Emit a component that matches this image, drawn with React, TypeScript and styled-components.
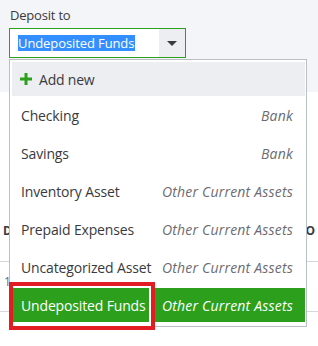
import React from 'react';
import styled, { createGlobalStyle } from 'styled-components';

const GlobalStyle = createGlobalStyle`
  html, body {
    margin: 0;
    padding: 0;
    background: #ffffff;
  }
  body {
    font-family: "Open Sans", "Liberation Sans", Arial, sans-serif;
    color: #393a3d;
  }
`;

const Page = styled.div`
  position: relative;
  width: 318px;
  height: 346px;
  overflow: hidden;
  background: #ffffff;
`;

const Header = styled.div`
  height: 92px;
  background: #f4f5f8;
  padding: 8px 0 0 10px;
  box-sizing: border-box;
`;

const Label = styled.div`
  font-size: 13px;
  font-weight: 500;
  line-height: 15px;
  letter-spacing: -0.2px;
  color: #393a3d;
  margin-bottom: 5px;
`;

const Select = styled.div`
  display: flex;
  width: 177px;
  height: 30px;
  margin-left: -1px;
  box-sizing: border-box;
  border: 1px solid #2ca01c;
  background: #ffffff;
`;

const SelectValue = styled.div`
  flex: 1;
  display: flex;
  align-items: center;
  padding-left: 8px;
`;

const Highlight = styled.span`
  background: #338fff;
  color: #ffffff;
  font-size: 13px;
  line-height: 16px;
  letter-spacing: -0.1px;
  padding-right: 1px;
`;

const ArrowButton = styled.div`
  width: 26px;
  display: flex;
  align-items: center;
  justify-content: center;
  background: #eceef1;
`;

const Arrow = styled.div`
  width: 0;
  height: 0;
  border-left: 5px solid transparent;
  border-right: 5px solid transparent;
  border-top: 5px solid #393a3d;
`;

const Table = styled.div`
  padding-top: 130px;
`;

const TableHead = styled.div`
  display: flex;
  justify-content: space-between;
  padding: 0 3px 0 3px;
  height: 39px;
  font-size: 12px;
  font-weight: 700;
  color: #393a3d;
`;

const TableRow = styled.div`
  display: flex;
  align-items: flex-start;
  height: 49px;
  padding-left: 4px;
  border-top: 1px solid #d4d7dc;
  border-bottom: 1px solid #d4d7dc;
  font-size: 12px;
  line-height: 40px;
  color: #6b6c72;
`;

const Menu = styled.div`
  position: absolute;
  left: 9px;
  top: 59px;
  width: 298px;
  height: 268px;
  box-sizing: border-box;
  border: 1px solid #babec5;
  background: #ffffff;
  padding: 2px 1px 3px 2px;
  display: flex;
  flex-direction: column;
`;

const AddNew = styled.div`
  height: 34px;
  display: flex;
  align-items: center;
  gap: 7px;
  padding-left: 8px;
  background: #eceef1;
  font-size: 14px;
  letter-spacing: -0.2px;
  color: #393a3d;
  margin-bottom: 2px;
`;

const List = styled.div`
  display: flex;
  flex-direction: column;
  gap: 4px;
`;

const Row = styled.div<{ $selected?: boolean }>`
  height: 34px;
  display: flex;
  align-items: center;
  justify-content: space-between;
  padding: 0 12px 0 9px;
  font-size: 14px;
  letter-spacing: -0.15px;
  background: ${(p) => (p.$selected ? '#2ca01c' : 'transparent')};
  color: ${(p) => (p.$selected ? '#ffffff' : '#393a3d')};
`;

const Type = styled.span<{ $selected?: boolean }>`
  font-style: italic;
  letter-spacing: 0.2px;
  color: ${(p) => (p.$selected ? '#ffffff' : '#6b6c72')};
`;

const Callout = styled.div`
  position: absolute;
  left: 9px;
  top: 282px;
  width: 146px;
  height: 48px;
  box-sizing: border-box;
  border: 4px solid #e31c24;
  box-shadow: inset -2px 2px 0 0 #ffffff;
  pointer-events: none;
`;

const accounts = [
  { name: 'Checking', type: 'Bank' },
  { name: 'Savings', type: 'Bank' },
  { name: 'Inventory Asset', type: 'Other Current Assets' },
  { name: 'Prepaid Expenses', type: 'Other Current Assets' },
  { name: 'Uncategorized Asset', type: 'Other Current Assets' },
  { name: 'Undeposited Funds', type: 'Other Current Assets', selected: true },
];

const Plus = () => (
  <svg width="12" height="12" viewBox="0 0 12 12">
    <path d="M4.5 0h3v4.5H12v3H7.5V12h-3V7.5H0v-3h4.5z" fill="#2ca01c" />
  </svg>
);

const App: React.FC = () => {
  return (
    <Page>
      <GlobalStyle />
      <Header>
        <Label>Deposit to</Label>
        <Select>
          <SelectValue>
            <Highlight>Undeposited Funds</Highlight>
          </SelectValue>
          <ArrowButton>
            <Arrow />
          </ArrowButton>
        </Select>
      </Header>
      <Table>
        <TableHead>
          <span>D</span>
          <span>O</span>
        </TableHead>
        <TableRow>1</TableRow>
      </Table>
      <Menu>
        <AddNew>
          <Plus />
          Add new
        </AddNew>
        <List>
          {accounts.map((a) => (
            <Row key={a.name} $selected={a.selected}>
              <span>{a.name}</span>
              <Type $selected={a.selected}>{a.type}</Type>
            </Row>
          ))}
        </List>
      </Menu>
      <Callout />
    </Page>
  );
};

export default App;
